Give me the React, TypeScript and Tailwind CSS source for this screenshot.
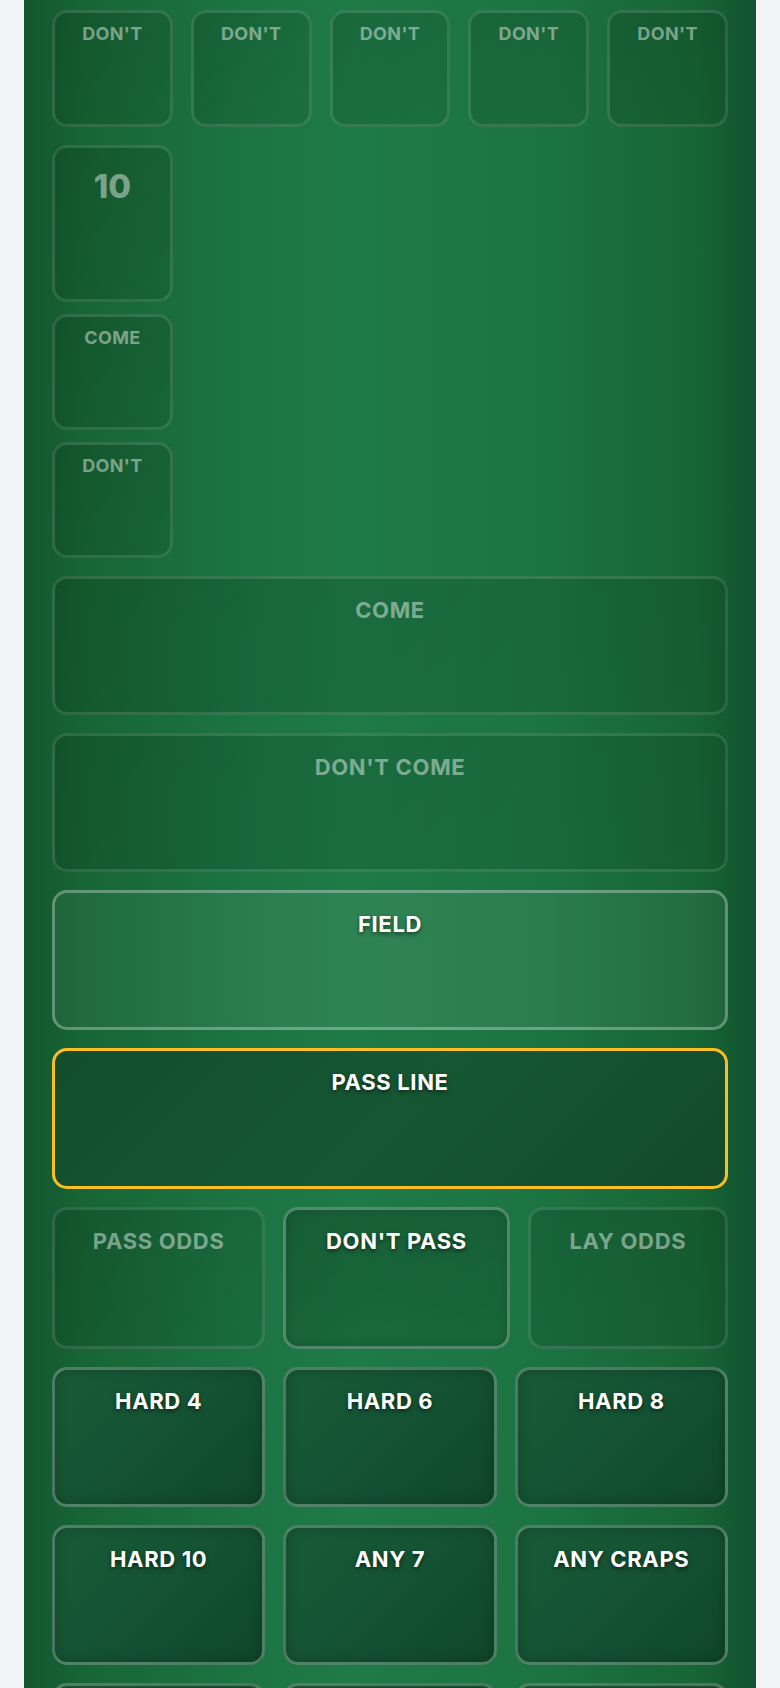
import React from "react";

type Tone = "dim" | "active" | "dark" | "field" | "pass";

const toneCls: Record<Tone, string> = {
  dim: "border-white/[0.12] bg-[linear-gradient(135deg,rgba(0,0,0,0.14),rgba(0,0,0,0.07))] text-white/45",
  active:
    "border-white/25 bg-[linear-gradient(160deg,rgba(0,0,0,0.22),rgba(0,0,0,0.12))] text-white [text-shadow:0_2px_4px_rgba(0,0,0,0.55)] shadow-[inset_0_0_12px_rgba(0,0,0,0.15)]",
  dark:
    "border-white/25 bg-[linear-gradient(135deg,#185b37_0%,#145233_50%,#0f4629_100%)] text-white [text-shadow:0_2px_4px_rgba(0,0,0,0.55)] shadow-[inset_0_0_14px_rgba(0,0,0,0.2)]",
  field:
    "border-white/30 bg-[linear-gradient(90deg,rgba(255,255,255,0.04),rgba(255,255,255,0.08)_50%,rgba(255,255,255,0.05))] text-white [text-shadow:0_2px_4px_rgba(0,0,0,0.55)]",
  pass:
    "border-[#fbbf24] bg-[linear-gradient(135deg,#134d2c_0%,#165733_50%,#124a2b_100%)] text-white [text-shadow:0_2px_4px_rgba(0,0,0,0.55)]",
};

function Cell({
  label,
  tone,
  size,
  className = "",
}: {
  label?: string;
  tone: Tone;
  size: "sm" | "lg" | "num";
  className?: string;
}) {
  const textCls =
    size === "sm"
      ? "pt-[12px] text-[18px] font-bold tracking-[0.02em]"
      : size === "num"
      ? "pt-[22px] text-[33px] font-extrabold"
      : "pt-[20px] text-[22px] font-bold tracking-[0.03em]";
  return (
    <div
      className={`flex flex-col items-center rounded-[15px] border-[3px] leading-none ${toneCls[tone]} ${textCls} ${className}`}
    >
      {label ? <span>{label}</span> : null}
    </div>
  );
}

export default function App() {
  return (
    <div className="min-h-screen bg-[#f3f4f6] px-6 font-['Inter','Noto_Sans',sans-serif]">
      <div className="h-[1688px] overflow-hidden bg-[linear-gradient(90deg,#125630_0%,#176535_8%,#1c7443_30%,#1e7a46_45%,#1c7443_70%,#176535_92%,#115230_100%)] px-[28px] pt-[10px]">
        <div className="flex flex-col gap-[18px]">
          <div className="grid grid-cols-5 gap-[18px]">
            {[0, 1, 2, 3, 4].map((i) => (
              <Cell key={i} label="DON'T" tone="dim" size="sm" className="h-[117px]" />
            ))}
          </div>
          <div className="grid grid-cols-5 gap-[18px]">
            <div className="flex flex-col gap-3">
              <Cell label="10" tone="dim" size="num" className="h-[157px]" />
              <Cell label="COME" tone="dim" size="sm" className="h-[116px]" />
              <Cell label="DON'T" tone="dim" size="sm" className="h-[116px]" />
            </div>
          </div>
          <Cell label="COME" tone="dim" size="lg" className="h-[139px]" />
          <Cell label="DON'T COME" tone="dim" size="lg" className="h-[139px]" />
          <Cell label="FIELD" tone="field" size="lg" className="h-[140px]" />
          <Cell label="PASS LINE" tone="pass" size="lg" className="h-[141px]" />
          <div className="grid grid-cols-[213fr_226fr_200fr] gap-[18px]">
            <Cell label="PASS ODDS" tone="dim" size="lg" className="h-[142px]" />
            <Cell label="DON'T PASS" tone="active" size="lg" className="h-[142px]" />
            <Cell label="LAY ODDS" tone="dim" size="lg" className="h-[142px]" />
          </div>
          <div className="grid grid-cols-3 gap-[18px]">
            <Cell label="HARD 4" tone="dark" size="lg" className="h-[140px]" />
            <Cell label="HARD 6" tone="dark" size="lg" className="h-[140px]" />
            <Cell label="HARD 8" tone="dark" size="lg" className="h-[140px]" />
          </div>
          <div className="grid grid-cols-3 gap-[18px]">
            <Cell label="HARD 10" tone="dark" size="lg" className="h-[140px]" />
            <Cell label="ANY 7" tone="dark" size="lg" className="h-[140px]" />
            <Cell label="ANY CRAPS" tone="dark" size="lg" className="h-[140px]" />
          </div>
          <div className="grid grid-cols-3 gap-[18px]">
            <Cell tone="dark" size="lg" className="h-[140px]" />
            <Cell tone="dark" size="lg" className="h-[140px]" />
            <Cell tone="dark" size="lg" className="h-[140px]" />
          </div>
        </div>
      </div>
    </div>
  );
}
